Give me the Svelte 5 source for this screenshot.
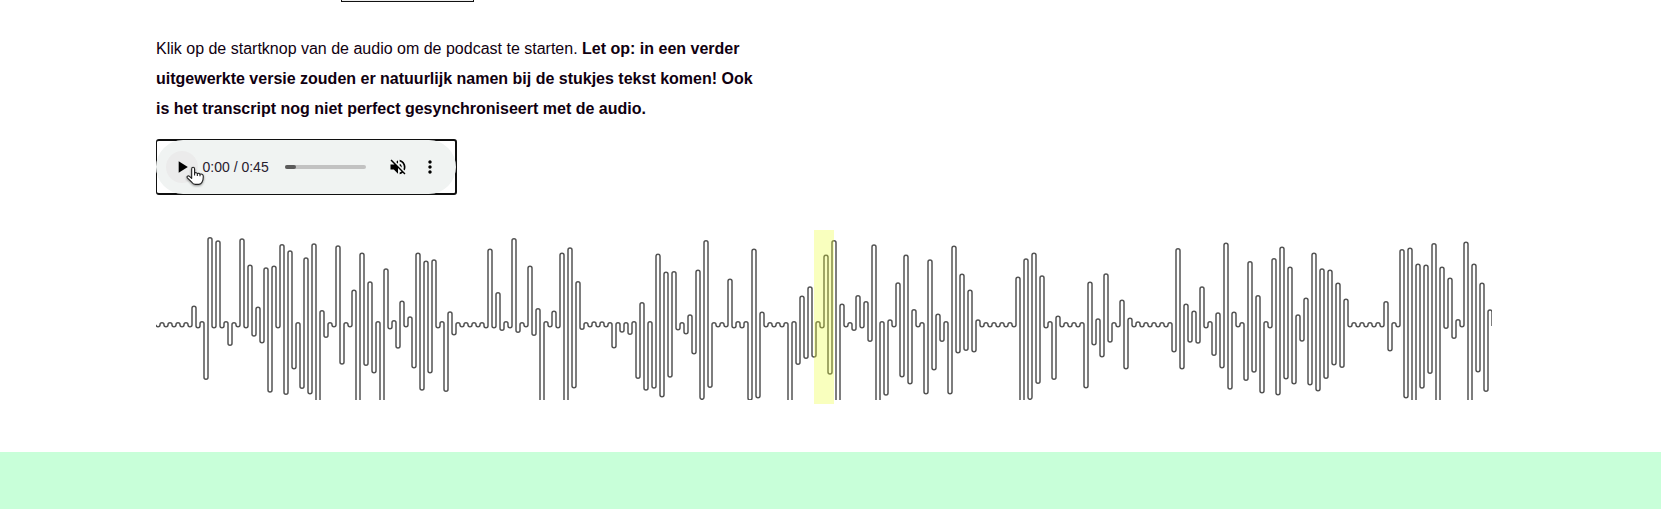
<script>
  const V = [305,305,305,305,305,308,463,308,308,361,305,308,333,353,501,308,508,431,490,506,700,337,305,417,305,700,421,443,700,311,369,305,428,495,443,308,499,329,305,305,305,308,308,316,308,322,305,331,700,305,308,700,488,313,305,305,305,368,321,328,460,495,489,515,456,314,326,386,523,487,305,305,308,308,525,518,305,305,305,700,418,400,396,308,447,700,305,316,308,349,700,510,305,455,476,305,506,434,349,506,383,376,380,305,305,305,305,305,700,523,475,308,463,305,305,305,488,359,395,351,305,431,305,305,305,305,305,380,431,351,354,308,391,428,492,305,466,441,503,308,509,461,476,348,479,497,460,419,427,305,305,305,305,305,377,305,518,700,489,445,700,310,340,305,700,440,499];
  const P = [293,293,293,293,244,290,38,48,290,293,42,121,247,129,124,59,78,293,99,57,257,293,63,293,196,85,171,290,132,287,229,276,85,109,105,290,261,293,293,293,293,73,203,290,41,293,124,251,290,259,85,69,170,293,291,291,293,293,293,290,233,290,88,142,140,293,270,136,47,293,293,163,290,290,73,262,293,293,293,290,214,186,290,91,47,238,293,212,230,60,290,285,174,91,254,293,105,268,290,64,148,196,285,293,293,293,293,157,102,85,153,290,274,293,293,293,172,282,147,293,226,280,291,293,293,293,293,71,238,259,186,290,264,55,262,293,110,212,290,101,67,127,270,220,85,132,136,175,223,293,293,293,293,230,293,74,70,118,121,56,127,160,284,52,118,175,255];

  // Each sample is one dip followed by one peak, joined by rounded caps.
  const wave =
    'M0 104.7' +
    V.map((v, k) => {
      const low = (3 + v / 3).toFixed(1);
      const high = (7 + P[k] / 3).toFixed(1);
      return `V${low}a2 2 0 0 0 4 0V${high}a2 2 0 0 1 4 0`;
    }).join('') +
    'V106';
</script>

<main>
  <div class="box"></div>
  <p>
    Klik op de startknop van de audio om de podcast te starten.
    <strong>Let op: in een verder uitgewerkte versie zouden er natuurlijk namen bij de stukjes tekst komen! Ook is het transcript nog niet perfect gesynchroniseert met de audio.</strong>
  </p>

  <div class="player">
    <div class="panel">
      <button class="play" aria-label="Afspelen">
        <svg width="24" height="24" viewBox="0 0 24 24"><path d="M8 5v14l11-7z" /></svg>
      </button>
      <span class="time">0:00 / 0:45</span>
      <div class="track"><i></i></div>
      <svg class="mute" width="20" height="20" viewBox="0 0 24 24"><path d="M16.5 12c0-1.77-1.02-3.29-2.5-4.03v2.21l2.45 2.45c.03-.2.05-.41.05-.63zm2.5 0c0 .94-.2 1.82-.54 2.64l1.51 1.51C20.63 14.91 21 13.5 21 12c0-4.28-2.99-7.86-7-8.77v2.06c2.89.86 5 3.54 5 6.71zM4.27 3L3 4.27 7.73 9H3v6h4l5 5v-6.73l4.25 4.25c-.67.52-1.42.93-2.25 1.18v2.06c1.38-.31 2.63-.95 3.69-1.81L19.73 21 21 19.73l-9-9L4.27 3zM12 4L9.91 6.09 12 8.18V4z" /></svg>
      <svg class="more" width="20" height="20" viewBox="0 0 24 24"><path d="M12 8c1.1 0 2-.9 2-2s-.9-2-2-2-2 .9-2 2 .9 2 2 2zm0 2c-1.1 0-2 .9-2 2s.9 2 2 2 2-.9 2-2-.9-2-2-2zm0 6c-1.1 0-2 .9-2 2s.9 2 2 2 2-.9 2-2-.9-2-2-2z" /></svg>
    </div>
    <svg class="cursor" width="20" height="20" viewBox="0 0 18 18">
      <path d="M5.1 11.2V2.8C5.1.6 7.7.6 7.7 2.8v3.6c.9-.7 2.2-.4 2.5.5.9-.6 2-.3 2.4.6 1-.6 2.7-.2 2.9 1.3.2 2.3-.2 4.1-1.1 5.9-.6 1.2-1.4 1.8-2.9 1.8H8.4c-1.5 0-2.3-.6-3-1.7L1.2 10.7c-.8-1.3.7-2.4 1.9-1.3z" />
      <path d="M7.7 6.4v2.2M10.2 6.9v2M12.6 7.5v1.7" />
    </svg>
  </div>

  <div class="wave">
    <svg width="1336" height="180" viewBox="0 0 1336 180"><path d={wave} /></svg>
    <div class="marker"></div>
  </div>
</main>
<footer></footer>

<style>
  :global(body) { background: #fff; }
  main {
    height: 452px;
    padding-left: 156px;
    box-sizing: border-box;
    font: 16px/30px "Liberation Sans", Arial, sans-serif;
    color: #100010;
    overflow: hidden;
  }
  .box {
    box-sizing: border-box;
    width: 133px;
    height: 2px;
    margin-left: 185px;
    background: #eee;
    border: 1px solid #111;
    border-top: 0;
  }
  p { width: 600px; margin: 32px 0 15px; }
  .player {
    position: relative;
    box-sizing: border-box;
    width: 301px;
    height: 56px;
    border: 2px solid #101010;
    border-left-width: 1px;
    border-radius: 3px;
  }
  .panel {
    box-sizing: border-box;
    display: flex;
    align-items: center;
    width: 300px;
    height: 54px;
    margin: -1px 0 0 -1px;
    padding-left: 10px;
    border-radius: 27px;
    background: #f0f3f2;
  }
  .play {
    display: grid;
    place-items: center;
    width: 32px;
    height: 32px;
    padding: 0;
    border: 0;
    border-radius: 50%;
    background: #ebebeb;
  }
  .play svg { width: 20px; height: 20px; }
  .time { width: 82.5px; margin-left: 4.5px; font-size: 14px; line-height: 20px; color: #28202e; white-space: nowrap; }
  .track { width: 81px; height: 4px; border-radius: 2px; background: #c2c2c2; }
  .track i { display: block; width: 11px; height: 4px; border-radius: 2px; background: #5b5b5b; }
  .mute { margin-left: 22px; }
  .more { margin-left: 12px; }
  .cursor { position: absolute; left: 29px; top: 25px; filter: drop-shadow(0 1px 1px #0006); }
  .cursor path { fill: #fff; stroke: #222; stroke-width: 1; stroke-linejoin: round; }
  .wave { position: relative; width: 1336px; height: 180px; margin-top: 25px; }
  .wave svg { display: block; }
  .wave path { fill: none; stroke: #545454; stroke-width: 1.5; }
  .marker { position: absolute; left: 658px; top: 10px; width: 20px; height: 174px; background: rgba(236, 255, 45, .31); }
  footer { height: 57px; background: #c8ffd9; }
</style>
